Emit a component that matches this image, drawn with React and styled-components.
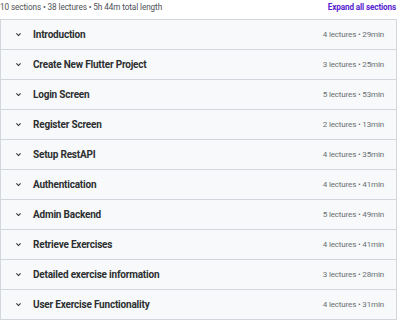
import React from 'react'
import styled, { createGlobalStyle } from 'styled-components'

const Global = createGlobalStyle`
  body {
    margin: 0;
    background: #fff;
    font-family: Roboto, "Noto Sans", sans-serif;
    color: #2d2f31;
  }
`;

const Wrapper = styled.div`
  width: 397px;
`;

const Header = styled.div`
  height: 19px;
  display: flex;
  justify-content: space-between;
  align-items: flex-start;
  padding: 1px 1px 0 0;
  box-sizing: border-box;
`;

const Summary = styled.div`
  font-size: 8.2px;
  letter-spacing: -0.1px;
  color: #4d5256;
  line-height: 12px;
`;

const Expand = styled.div`
  font-size: 8.2px;
  letter-spacing: -0.15px;
  font-weight: 700;
  color: #5624d0;
  line-height: 12px;
  cursor: pointer;
`;

const Panel = styled.div`
  border: 1px solid #d1d7dc;
  border-bottom: none;
`;

const Row = styled.div`
  height: 29px;
  display: flex;
  align-items: center;
  background: #f7f9fa;
  border-bottom: 1px solid #d1d7dc;
  padding: 0 12px 0 14px;
`;

const Chevron = styled.svg`
  width: 7px;
  height: 7px;
  margin-right: 11px;
  flex-shrink: 0;
`;

const Title = styled.div`
  flex: 1;
  font-size: 10px;
  letter-spacing: -0.2px;
  font-weight: 700;
  color: #2d2f31;
`;

const Meta = styled.div`
  font-size: 8px;
  letter-spacing: -0.15px;
  color: #6a6f73;
`;

const sections = [
  ['Introduction', 4, 29],
  ['Create New Flutter Project', 3, 25],
  ['Login Screen', 5, 53],
  ['Register Screen', 2, 13],
  ['Setup RestAPI', 4, 35],
  ['Authentication', 4, 41],
  ['Admin Backend', 5, 49],
  ['Retrieve Exercises', 4, 41],
  ['Detailed exercise information', 3, 28],
  ['User Exercise Functionality', 4, 31],
];

const App = () => {
  return (
    <>
      <Global />
      <Wrapper>
        <Header>
          <Summary>10 sections • 38 lectures • 5h 44m total length</Summary>
          <Expand>Expand all sections</Expand>
        </Header>
        <Panel>
          {sections.map(([name, n, min]) => (
            <Row key={name}>
              <Chevron viewBox="0 0 10 10">
                <path d="M2 3.5 L5 6.5 L8 3.5" fill="none" stroke="#2d2f31" strokeWidth="1.6" />
              </Chevron>
              <Title>{name}</Title>
              <Meta>{n} lectures • {min}min</Meta>
            </Row>
          ))}
        </Panel>
      </Wrapper>
    </>
  )
}

export default App
